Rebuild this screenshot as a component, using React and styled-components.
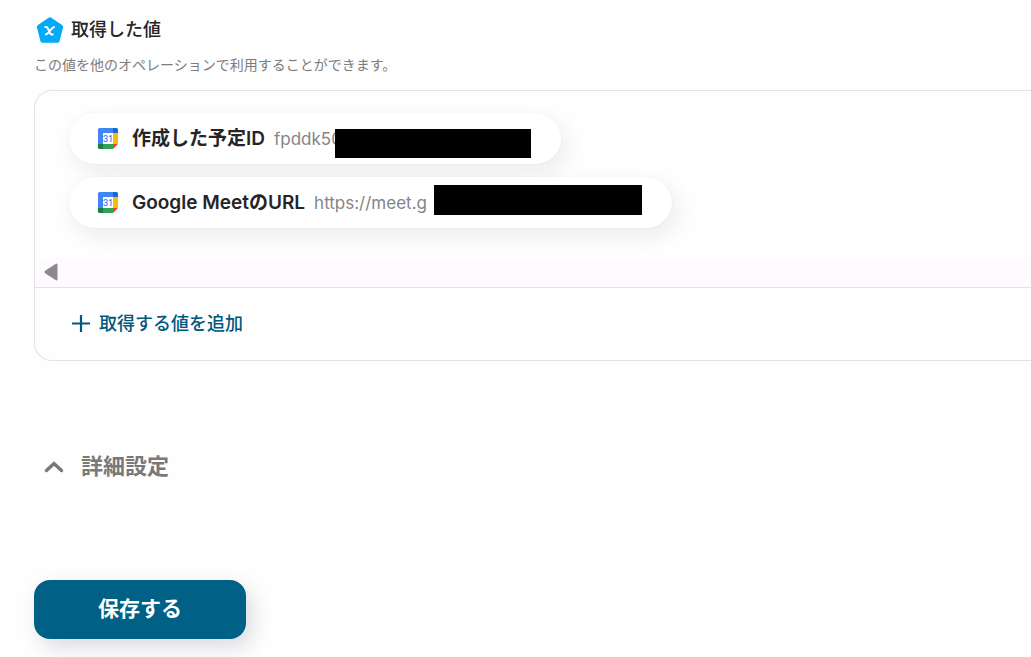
import React from "react";
import styled, { createGlobalStyle } from "styled-components";

const GlobalStyle = createGlobalStyle`
  * {
    box-sizing: border-box;
  }

  body {
    margin: 0;
    background: #fefefe;
    color: #252528;
    font-family: Inter, "Noto Sans CJK JP", sans-serif;
    overflow: hidden;
  }

  button {
    border: none;
    background: none;
    padding: 0;
    font-family: inherit;
    cursor: pointer;
  }
`;

const Page = styled.main`
  padding: 16px 0 18px 34px;
`;

const Heading = styled.h2`
  display: flex;
  align-items: center;
  gap: 7px;
  margin: 0;
  font-size: 18px;
  font-weight: 500;
  line-height: 28px;
`;

const Note = styled.p`
  margin: 10px 0 14px;
  color: #7d7c7f;
  font-size: 14px;
  line-height: 22px;
`;

const Panel = styled.section`
  border: 1px solid #e4e2e5;
  border-right: none;
  border-radius: 18px 0 0 18px;
`;

const List = styled.ul`
  display: flex;
  flex-direction: column;
  align-items: flex-start;
  gap: 13px;
  margin: 0;
  padding: 22px 34px 30px;
  list-style: none;
`;

const Chip = styled.li`
  display: flex;
  align-items: center;
  height: 51px;
  padding: 0 30px 0 29px;
  border-radius: 26px;
  background: #fff;
  box-shadow: 5px 8px 20px rgba(60, 50, 70, 0.09), 0 0 2px rgba(60, 50, 70, 0.06);
`;

const ChipName = styled.span`
  margin: 0 9px 0 14px;
  font-size: 19px;
  font-weight: 600;
  line-height: 28px;
  white-space: nowrap;
`;

const ChipValue = styled.span`
  position: relative;
  width: ${({ $width }) => $width}px;
  color: #858487;
  font-size: 17px;
  line-height: 28px;
  white-space: nowrap;
`;

const Mask = styled.span`
  position: absolute;
  top: ${({ $top }) => $top}px;
  right: 0;
  width: ${({ $width }) => $width}px;
  height: ${({ $height }) => $height}px;
  background: #000;
`;

const ScrollTrack = styled.div`
  display: flex;
  align-items: flex-start;
  height: 30px;
  padding: 4px 0 0 8px;
  border-bottom: 1px solid #e4e2e5;
  background: #fdfbfe;
`;

const ScrollButton = styled.button`
  display: flex;
`;

const AddButton = styled.button`
  display: flex;
  align-items: center;
  gap: 8px;
  margin: 22px 37px;
  color: #00597c;
  font-size: 18px;
  font-weight: 500;
  line-height: 28px;
`;

const DetailsButton = styled.button`
  display: flex;
  align-items: center;
  gap: 16px;
  margin: 89px 0 98px 9px;
  color: #79787a;
  font-size: 22px;
  font-weight: 600;
  line-height: 32px;
`;

const SaveButton = styled.button`
  padding: 14px 64px 15px;
  border-radius: 16px;
  background: #006086;
  box-shadow: 6px 8px 20px rgba(40, 50, 80, 0.17);
  color: #fff;
  font-size: 21px;
  font-weight: 700;
  line-height: 30px;
`;

const VariableIcon = () => (
  <svg width="30" height="28" viewBox="0 0 30 28" aria-hidden="true">
    <path
      d="M16 3.8 26.6 11 23.2 24.3H8.8L5.4 11Z"
      fill="#03aaf5"
      stroke="#03aaf5"
      strokeWidth="5"
      strokeLinejoin="round"
    />
    <path
      d="M10.5 11h1.6q1.2 0 1.8 1.4l1.9 4.5q.7 1.6 1.9 1.6h1.9M20.8 11q-1.5 0-2.5 1.2l-4.4 5q-1 1.3-2.9 1.3"
      fill="none"
      stroke="#fff"
      strokeWidth="2"
    />
  </svg>
);

const CalendarIcon = () => (
  <svg width="20" height="21" viewBox="0 0 20 21" aria-hidden="true">
    <path d="M1.5 0H15v5H5v11H0V1.5Q0 0 1.5 0Z" fill="#4285f4" />
    <path d="M15 0h3.5Q20 0 20 1.5V5h-5Z" fill="#1967d2" />
    <path d="M15 5h5v11h-5Z" fill="#fbbc04" />
    <path d="M5 16h10v5H5Z" fill="#34a05a" />
    <path d="M0 16h5v5H1.5Q0 21 0 19.5Z" fill="#188038" />
    <path d="M15 16h5l-5 5Z" fill="#ea4335" />
    <path d="M5 5h10v11H5Z" fill="#fff" />
    <text
      x="10"
      y="14"
      textAnchor="middle"
      fontFamily="Roboto, sans-serif"
      fontSize="9"
      fontWeight="500"
      fill="#4285f4"
    >
      31
    </text>
  </svg>
);

const values = [
  {
    name: "作成した予定ID",
    value: "fpddk50",
    width: 257,
    mask: { $width: 196, $height: 29, $top: 4 },
  },
  {
    name: "Google MeetのURL",
    value: "https://meet.g",
    width: 328,
    mask: { $width: 208, $height: 30, $top: -4 },
  },
];

const App = () => {
  return (
    <>
      <GlobalStyle />
      <Page>
        <Heading>
          <VariableIcon />
          取得した値
        </Heading>
        <Note>この値を他のオペレーションで利用することができます。</Note>
        <Panel>
          <List>
            {values.map((item) => (
              <Chip key={item.name}>
                <CalendarIcon />
                <ChipName>{item.name}</ChipName>
                <ChipValue $width={item.width}>
                  {item.value}
                  <Mask {...item.mask} />
                </ChipValue>
              </Chip>
            ))}
          </List>
          <ScrollTrack>
            <ScrollButton type="button" aria-label="左へスクロール">
              <svg width="16" height="20" viewBox="0 0 16 20" aria-hidden="true">
                <path
                  d="M13.5 2.5v15L3 10.7q-1-.7 0-1.4Z"
                  fill="#8b898c"
                  stroke="#8b898c"
                  strokeWidth="2"
                  strokeLinejoin="round"
                />
              </svg>
            </ScrollButton>
          </ScrollTrack>
          <AddButton type="button">
            <svg width="19" height="18" viewBox="0 0 19 18" aria-hidden="true">
              <path d="M0 8.5h18M9 0v17" stroke="currentColor" strokeWidth="2.2" />
            </svg>
            取得する値を追加
          </AddButton>
        </Panel>
        <DetailsButton type="button">
          <svg width="22" height="20" viewBox="0 0 22 20" aria-hidden="true">
            <path
              d="m3.5 14.5 7.5-7 7.5 7"
              fill="none"
              stroke="currentColor"
              strokeWidth="3.4"
              strokeLinecap="round"
            />
          </svg>
          詳細設定
        </DetailsButton>
        <SaveButton type="button">保存する</SaveButton>
      </Page>
    </>
  );
};

export default App;
